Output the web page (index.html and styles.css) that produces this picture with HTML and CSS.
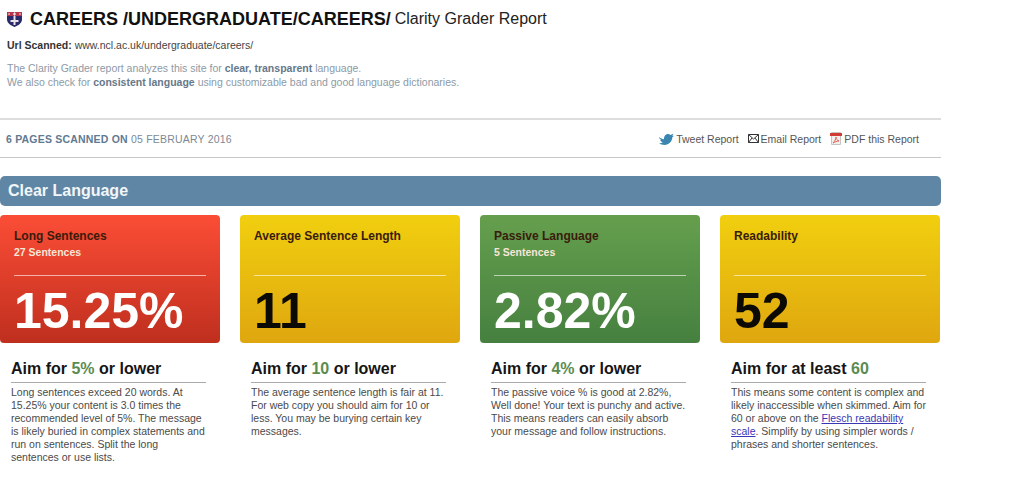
FILE: index.html
```html
<!DOCTYPE html>
<html lang="en">
<head>
	<meta charset="UTF-8">
	<title>Clarity Grader Report</title>
	<link rel="stylesheet" href="styles.css">
</head>
<body>
	<div class="page">
		<h1 class="title">
			<svg class="crest" width="15" height="15" viewBox="0 0 15 15">
				<path d="M0 0h15v7c0 4-3 6-7.500 8C3 13 0 11 0 7z" fill="#2b2a6b"/>
				<path d="M0 0h15v4H0z" fill="#b8354a"/>
				<path d="M7.500 0l1.500 2-1.500 2-1.500-2zM2 1l1 1-1 1-1-1zM13 1l1 1-1 1-1-1z" fill="#e8e4e8"/>
				<path d="M6.500 4h2v4h3v2h-3v3h-2v-3h-3V8h3z" fill="#e8e4ea"/>
			</svg>
			<strong>CAREERS /UNDERGRADUATE/CAREERS/</strong> <span>Clarity Grader Report</span>
		</h1>
		<p class="url"><b>Url Scanned:</b> www.ncl.ac.uk/undergraduate/careers/</p>
		<p class="intro">The Clarity Grader report analyzes this site for <b>clear, transparent</b> language.<br>We also check for <b>consistent language</b> using customizable bad and good language dictionaries.</p>

		<div class="scan-bar">
			<div class="scanned"><b>6 PAGES SCANNED ON</b> 05 FEBRUARY 2016</div>
			<div class="actions">
				<a class="action">
					<svg width="15" height="12" viewBox="0 0 15 12"><path d="M0 4c2 1.500 3 2 5 2.200C4.900 3.500 6.500 1 9 1c1 0 1.800.4 2.300 1L14.500.8 13.300 3l1.700-.3-1.700 1.500C13.300 8 10 12 5.500 12 3.500 12 1.500 11.300 0 10.300c1.500.1 3-.3 4-1.200C2.700 9 1.500 8 1.200 6.900h1.300C1.200 6.400.2 5.300 0 4z" fill="#3a86b0"/></svg>
					Tweet Report
				</a>
				<a class="action">
					<svg width="11" height="9" viewBox="0 0 11 9"><path d="M.5.500h10v8H.5zM.5.500l5 4.500 5-4.500M.5 8.500l3.500-4.500M10.500 8.500L7 4" fill="none" stroke="#333" stroke-width="1"/></svg>
					Email Report
				</a>
				<a class="action">
					<svg width="12" height="13" viewBox="0 0 12 13"><path d="M1.500.500h9v12h-9z" fill="#f2efef" stroke="#c9c4c4" stroke-width="1"/><path d="M0 1h12v3H0z" fill="#d23b35"/><path d="M3 11c2-2 3-4 3-6 0 2 1 3 3 4-2 0-4 1-6 2z" fill="none" stroke="#e0645c" stroke-width="1"/></svg>
					PDF this Report
				</a>
			</div>
		</div>

		<h2 class="band">Clear Language</h2>

		<div class="grid">
			<div class="col">
				<div class="card red">
					<div class="card-head">
						<h3>Long Sentences</h3>
						<h4>27 Sentences</h4>
					</div>
					<div class="score">15.25%</div>
				</div>
				<div class="advice">
					<h5>Aim for <em>5%</em> or lower</h5>
					<p>Long sentences exceed 20 words. At 15.25% your content is 3.0 times the recommended level of 5%. The message is likely buried in complex statements and run on sentences. Split the long sentences or use lists.</p>
				</div>
			</div>
			<div class="col">
				<div class="card yellow">
					<div class="card-head">
						<h3>Average Sentence Length</h3>
					</div>
					<div class="score">11</div>
				</div>
				<div class="advice">
					<h5>Aim for <em>10</em> or lower</h5>
					<p>The average sentence length is fair at 11. For web copy you should aim for 10 or less. You may be burying certain key messages.</p>
				</div>
			</div>
			<div class="col">
				<div class="card green">
					<div class="card-head">
						<h3>Passive Language</h3>
						<h4>5 Sentences</h4>
					</div>
					<div class="score">2.82%</div>
				</div>
				<div class="advice">
					<h5>Aim for <em>4%</em> or lower</h5>
					<p>The passive voice % is good at 2.82%, Well done! Your text is punchy and active. This means readers can easily absorb your message and follow instructions.</p>
				</div>
			</div>
			<div class="col">
				<div class="card yellow">
					<div class="card-head">
						<h3>Readability</h3>
					</div>
					<div class="score">52</div>
				</div>
				<div class="advice">
					<h5>Aim for at least <em>60</em></h5>
					<p>This means some content is complex and likely inaccessible when skimmed. Aim for 60 or above on the <a href="#">Flesch readability scale</a>. Simplify by using simpler words / phrases and shorter sentences.</p>
				</div>
			</div>
		</div>
	</div>
</body>
</html>
```

FILE: styles.css
```css
html, body {
	margin: 0;
	padding: 0;
	background: #fff;
	font-family: "Liberation Sans", Arial, sans-serif;
}

.page {
	width: 941px;
}

.title {
	display: flex;
	align-items: center;
	gap: 4px;
	margin: 0;
	padding: 8px 0 0 7px;
	height: 22px;
	font-size: 16px;
	font-weight: normal;
	color: #222;
	white-space: pre;
}

.title strong {
	font-size: 18px;
	color: #111;
	margin-left: 4px;
}

.crest {
	flex: none;
}

.url {
	margin: 9px 0 0 7px;
	font-size: 10.500px;
	line-height: 13px;
	color: #444;
}

.url b {
	color: #333;
}

.intro {
	margin: 10px 0 0 7px;
	font-size: 10.500px;
	line-height: 13.500px;
	color: #8d9aa6;
}

.intro b {
	color: #66788a;
}

.scan-bar {
	display: flex;
	justify-content: space-between;
	align-items: center;
	margin-top: 29px;
	height: 37px;
	border-top: 2px solid #ddd;
	border-bottom: 1px solid #c8c8c8;
	padding: 0 22px 0 6px;
	font-size: 10.500px;
}

.scanned {
	color: #7c8894;
	letter-spacing: 0.200px;
}

.scanned b {
	color: #5f7a92;
}

.actions {
	display: flex;
	gap: 9px;
	color: #555;
}

.action {
	display: flex;
	align-items: center;
	gap: 2px;
}

.band {
	margin: 18px 0 0;
	height: 30px;
	padding: 0 8px;
	line-height: 29px;
	font-size: 16px;
	color: #f2f6f9;
	background: #5f87a5;
	border-radius: 5px;
}

.grid {
	display: grid;
	grid-template-columns: repeat(4, 220px);
	gap: 20px;
	margin-top: 9px;
}

.card {
	height: 128px;
	border-radius: 4px;
	padding: 14px 14px 0;
	box-sizing: border-box;
}

.red {
	background: linear-gradient(#fb4d36, #bf2f1e);
}

.yellow {
	background: linear-gradient(#f1cf0f, #dfa70f);
}

.green {
	background: linear-gradient(#659f4d, #468040);
}

.card-head {
	height: 46px;
	border-bottom: 1px solid rgba(255, 255, 255, 0.6);
}

.card h3 {
	margin: 0;
	font-size: 12px;
	line-height: 15px;
	color: #3a1c0c;
}

.card h4 {
	margin: 1px 0 0;
	font-size: 10.500px;
	line-height: 15px;
	color: #f6e6d8;
}

.score {
	margin-top: 7px;
	font-size: 50px;
	line-height: 56px;
	font-weight: bold;
	color: #fff;
}

.yellow .score {
	color: #0c0a04;
}

.advice {
	padding: 0 14px 0 11px;
}

.advice h5 {
	margin: 0;
	padding: 16px 0 3px;
	font-size: 16px;
	line-height: 20px;
	color: #151515;
	border-bottom: 1px solid #aaa;
}

.advice em {
	font-style: normal;
	color: #5a8c50;
}

.advice p {
	margin: 3px 0 0;
	font-size: 10.500px;
	line-height: 13px;
	color: #4a4a4a;
}

.advice a {
	color: #3b36b5;
}
```
